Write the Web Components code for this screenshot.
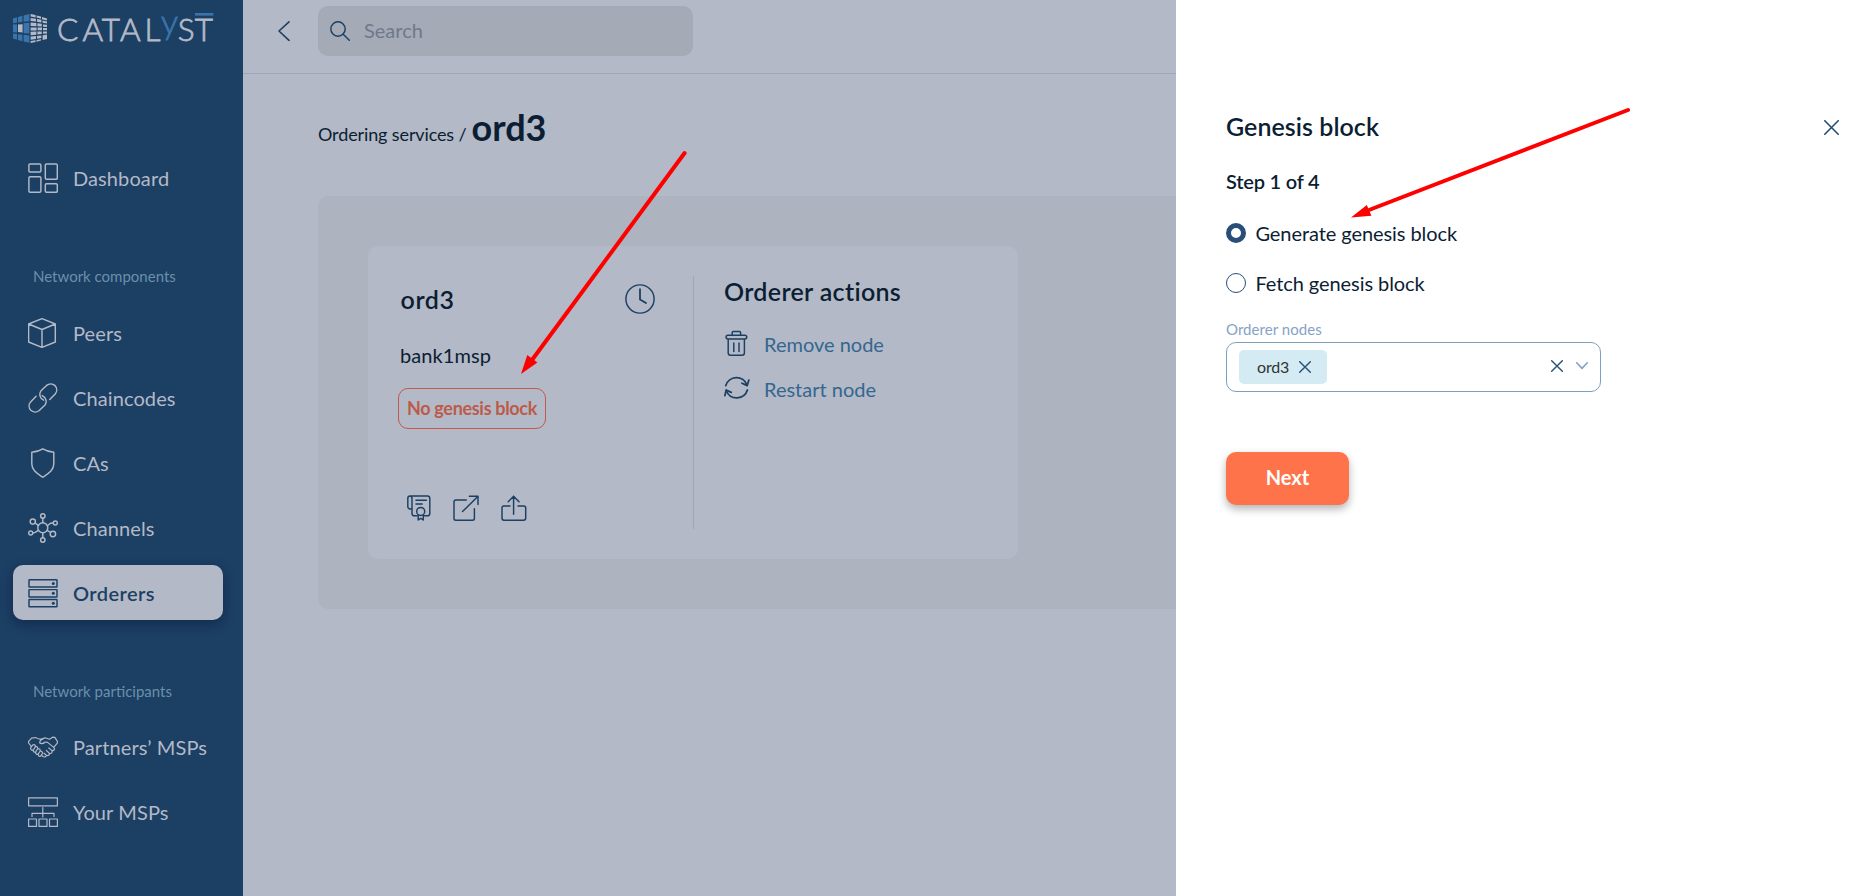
<!DOCTYPE html>
<html lang="en">
<head>
<meta charset="utf-8">
<title>Catalyst – Orderers</title>
<style>
  html, body { margin: 0; height: 100%; overflow: hidden; background: #b3b9c6; }
  body { font-family: Lato, "Open Sans", sans-serif; font-size: 20px; color: #0b1e33; }
</style>
</head>
<body>
<app-shell>
  <side-bar slot="nav">
    <nav-item icon="dashboard">Dashboard</nav-item>
    <nav-label>Network components</nav-label>
    <nav-item icon="cube">Peers</nav-item>
    <nav-item icon="chain">Chaincodes</nav-item>
    <nav-item icon="shield">CAs</nav-item>
    <nav-item icon="hub">Channels</nav-item>
    <nav-item icon="servers" active>Orderers</nav-item>
    <nav-label>Network participants</nav-label>
    <nav-item icon="handshake">Partners’ MSPs</nav-item>
    <nav-item icon="tree">Your MSPs</nav-item>
  </side-bar>
  <top-bar slot="main"></top-bar>
  <page-title slot="main" parent="Ordering services /">ord3</page-title>
  <node-panel slot="main">
    <node-card name="ord3" msp="bank1msp" status="No genesis block">
      <action-link icon="trash">Remove node</action-link>
      <action-link icon="restart">Restart node</action-link>
    </node-card>
  </node-panel>
  <side-drawer slot="drawer" heading="Genesis block" step="Step 1 of 4">
    <radio-option checked>Generate genesis block</radio-option>
    <radio-option>Fetch genesis block</radio-option>
    <multi-select label="Orderer nodes">ord3</multi-select>
    <primary-button>Next</primary-button>
  </side-drawer>
  <pointer-arrows slot="overlay"></pointer-arrows>
</app-shell>

<script>
const ICONS = {
  dashboard: [30, 30, '<rect x=".9" y=".9" width="12" height="8" rx="1.2"/><rect x="17.3" y=".9" width="12" height="15.4" rx="1.2"/><rect x=".9" y="13.7" width="12" height="15.5" rx="1.2"/><rect x="17.3" y="20.8" width="12" height="8.4" rx="1.2"/>'],
  cube: [30, 30, '<path d="M14 .7 27.3 6V24L14 29.4.6 24V6ZM.6 6 14 11.5 27.3 6M14 11.5V29.4"/>'],
  chain: [30, 30, '<path d="M21.8 16.6 27.2 11A6.4 6.4 0 0 0 27 2.6 6.4 6.4 0 0 0 18.6 2.4L13 7.8A6.3 6.3 0 0 0 15.6 17.2M8.1 13.2 2.6 18.9A6.4 6.4 0 0 0 2.8 27.3 6.4 6.4 0 0 0 11.2 27.5L17 22A6.3 6.3 0 0 0 14.2 12.6"/>'],
  shield: [30, 30, '<path d="M14.8.8C18 2.8 22 3.8 25.8 4.3V16C25.8 22.5 20 25.6 14.8 29.2 9.6 25.6 3.8 22.5 3.8 16V4.3C7.6 3.8 11.6 2.8 14.8.8Z"/>'],
  hub: [30, 30, '<circle cx="14.8" cy="14.8" r="5"/><circle cx="14.8" cy="3" r="2.2"/><circle cx="4.8" cy="8.6" r="2.6"/><circle cx="27.3" cy="10" r="2"/><circle cx="2.7" cy="20" r="2"/><circle cx="24.9" cy="21" r="2.7"/><circle cx="14.8" cy="27" r="2.2"/><path d="M14.8 5.2V9.8M14.8 19.8V24.8M7 10 10.4 12.4M25.3 10 22.5 10.2 19.4 12.7M4.7 20 7.2 19.4 10.4 17.3M19.2 17.4 22.6 19.5"/>'],
  servers: [30, 30, '<rect x="1" y="1.7" width="28" height="7.3" rx=".5"/><rect x="1" y="11.6" width="28" height="7.3" rx=".5"/><rect x="1" y="21.5" width="28" height="7.3" rx=".5"/><g fill="currentColor" stroke="none"><circle cx="25.3" cy="5.4" r="1.5"/><circle cx="25.3" cy="15.3" r="1.5"/><circle cx="25.3" cy="25.2" r="1.5"/></g>'],
  handshake: [30, 30, '<g stroke-width="1.2"><path d="M3.6 6.2 8 5.5C9 7 11 7.2 13.4 7L17 5.8 21.5 7.2 24.6 5.2 26.8 5.4 29.4 9.4V11.2L26.5 14.3 25.6 15.4M3.6 6.2.6 9.4V11L3.4 14.6M17 5.8 12.4 8.4 11.6 10.8C13.4 12.2 15.6 11.6 17.2 10L19.6 10.4 26 15.6C27.5 17.3 25.6 19.3 23.8 18.4L20.8 16M23.8 18.4C25 20.4 23.1 22.2 21.3 21.2L18.3 18.4M21.3 21.2C21.8 23.2 20 24.2 18.4 23.3L16 21.2M18.4 23.3C18 25 16.4 25.4 15 24.6L13.7 23.6"/><path d="M3.4 14.6 4.8 13C6.4 11.8 8 13.4 7.2 15L5.6 17.6C4.4 19 2.2 17.6 2.6 15.8ZM7.2 15C8.8 14 10.4 15.4 9.6 17L7.8 19.7C6.4 21 4.4 19.4 5.6 17.6M9.6 17C11.4 16.2 12.8 17.6 12 19.2L10.4 21.8C9 23 7 21.6 7.8 19.7M12 19.2C13.8 18.8 15 20.4 14.2 21.8L13 23.8C11.6 25 9.6 23.6 10.4 21.8"/></g>'],
  tree: [30, 30, '<path d="M.6.8H29.4V8.8H.6ZM14.8 10.5V20M4 19.5V16.3H26V19.5M.6 22H8.5V29.4H.6ZM11 22H19V29.4H11ZM21.5 22H29.4V29.4H21.5Z" stroke-width="1.2"/>'],
  back: [12, 20, '<path d="M11 .8 1 10 11 19.4" stroke-width="1.6"/>'],
  search: [20, 20, '<circle cx="8" cy="8" r="7.2"/><path d="M13.2 13.2 19.3 19.3"/>'],
  clock: [30, 30, '<circle cx="15" cy="15" r="14.1"/><path d="M15 5.2V15.4L21 19" stroke-width="1.8"/>'],
  certificate: [24, 26, '<path d="M5 3.5C5 1.8 4.3 1 3 1 1.6 1 .8 1.8.8 3.5V11.8C.8 13.6 2 14.2 5 14.2M3 1H20.5C22 1 22.8 2 22.8 3.4V18.4C22.8 20 22 20.8 20.4 20.8H17.5M5 3.5V18.4C5 20 6 20.8 7.4 20.8H10M9 5.2H19.4M9 9H15.2"/><circle cx="13.7" cy="16.4" r="4"/><path d="M11.2 19.6V25L13.7 23.4 16.3 25V19.6"/>'],
  external: [26, 26, '<path d="M13.3 5H3C1.8 5 1 5.8 1 7V23.4C1 24.6 1.8 25.2 3 25.2H19.4C20.6 25.2 21.4 24.6 21.4 23.4V13.6M9.5 16.6 25 1.3M16.4 1.3H25V9.6"/>'],
  share: [26, 26, '<path d="M9 11H2.8C1.6 11 1 11.8 1 13V23C1 24.4 1.7 25.2 3 25.2H22.6C24 25.2 24.7 24.4 24.7 23V13C24.7 11.8 24 11 22.8 11H17M12.6 19.2V1.2M7.2 6.8 12.6 1.2 18 6.8"/>'],
  trash: [26, 26, '<path d="M4.2 9V23C4.2 24.4 5 25.2 6.4 25.2H18C19.4 25.2 20.4 24.4 20.4 23V9M4 5.2H20.8C23.4 5.2 23.4 8.9 20.8 8.9H4C1.4 8.9 1.4 5.2 4 5.2ZM8.2 5.2V2.6C8.2 1.8 8.6 1.4 9.4 1.4H15.4C16.2 1.4 16.6 1.8 16.6 2.6V5.2M9.8 13V21.4M15 13V21.4"/>'],
  restart: [26, 24, '<g stroke-width="1.8"><path d="M1.8 9.6A11.2 11.2 0 0 1 23 9M23.4 14A11.2 11.2 0 0 1 2.4 15"/><path d="M18 7.2 23.2 9.6 24.8 4.2M7.2 16.4 2.2 14 .9 19.6"/></g>'],
  close: [15, 15, '<path d="M.8.8 14.2 14.2M14.2.8.8 14.2" stroke-width="1.6"/>'],
  cross: [12, 12, '<path d="M.7.7 11.3 11.3M11.3.7.7 11.3" stroke-width="1.4"/>'],
  chevron: [12, 8, '<path d="M.7.8 6 6.4 11.3.8" stroke-width="1.6"/>']
};

function define(tag, render) {
  customElements.define(tag, class extends HTMLElement {
    constructor() { super(); this.attachShadow({ mode: 'open' }); }
    connectedCallback() { this.shadowRoot.innerHTML = render(this); }
  });
}
const attr = (el, name) => el.getAttribute(name) || '';

define('ui-icon', el => {
  const [w, h, body] = ICONS[attr(el, 'name')];
  return `<style>:host{display:block;flex:none;width:${w}px;height:${h}px}svg{display:block}</style>
  <svg width="${w}" height="${h}" viewBox="0 0 ${w} ${h}" fill="none" stroke="currentColor" stroke-width="1.45" stroke-linejoin="round" stroke-linecap="round">${body}</svg>`;
});

define('app-shell', () => `<style>
  :host{display:flex;position:relative;width:100%;height:100vh;overflow:hidden}
  main{flex:1;min-width:0;display:flex;flex-direction:column;background:#b3b9c6}
</style>
<slot name="nav"></slot><main><slot name="main"></slot></main><slot name="drawer"></slot><slot name="overlay"></slot>`);

define('brand-logo', () => `<style>
  :host{display:block;height:50px}
  svg{display:block}
  text{font:300 31.5px Lato,sans-serif;fill:#b3b9c6;stroke:#b3b9c6;stroke-width:.8}
  .y{font-size:34px;fill:#3a74aa;stroke:#3a74aa}
</style>
<svg width="230" height="50" viewBox="0 0 230 50">
  <g fill="#3a74aa">
    <path d="M13 18.4 17 17.2V22.6L13 23.2ZM18 17 22.4 15.8V21.8L18 22.4ZM23.6 15.5 29.4 14V21.2L23.6 21.8ZM13 24.6 17 24.2V32.6L13 32.2ZM23.6 23.2 29.4 22.8V33.6L23.6 33.2ZM13 33.6 17 34V39.8L13 38.6ZM18 34.2 22.4 34.8V41.2L18 40ZM23.6 34.8 29.4 35.4V42.8L23.6 41.4Z"/>
    <rect x="195" y="13" width="18.4" height="2.6"/>
  </g>
  <g fill="#b3b9c6">
    <path d="M18 24.6 22.6 24.2V32.4L18 32Z"/>
    <path d="M30.6 14 35.6 15V17.4L30.6 16.6ZM36.6 15.4 41 16.6V18.8L36.6 17.6ZM42 17 47 18.4V20.6L42 19.2ZM30.6 18 36 18.8V21.6L30.6 21ZM37 19 41.4 19.8V22.4L37 21.8ZM42.6 20.4 47 21.4V23.6L42.6 22.8ZM30.6 22.4 36.4 23V26.2L30.6 26ZM37.4 23.2 41.8 23.8V26.4L37.4 26.2ZM43 24.4 47 24.8V27L43 26.8ZM30.6 27.4H36.6V30.4H30.6ZM37.6 27.6H42V30.2H37.6ZM43 28H47V30.2H43ZM30.6 31.8 36.4 31.6V34.8L30.6 35.2ZM37.4 31.6 41.8 31.4V34L37.4 34.6ZM43 31.4H47V33.4L43 33.8ZM30.6 36.6 36 36V39L30.6 39.8ZM37 36 41.4 35.4V38L37 38.8ZM42.6 35.2 47 34.6V39L42.6 40ZM30.6 41 35.6 40.2V42L30.6 43ZM36.6 40 41 39.2V40.6L36.6 41.8Z"/>
  </g>
  <text y="40.6" x="57 82.5 101.8 120 144.6">CATAL</text><text class="y" x="161" y="34.4">y</text><text y="40.6" x="177.8 194.8">ST</text>
</svg>`);

define('side-bar', () => `<style>
  :host{box-sizing:border-box;flex:none;width:243px;display:flex;flex-direction:column;background:#1c3f64}
  nav{display:flex;flex-direction:column;gap:10px;padding:100px 20px 0 13px}
</style><brand-logo></brand-logo><nav><slot></slot></nav>`);

define('nav-item', el => `<style>
  :host{box-sizing:border-box;display:flex;align-items:center;height:55px;padding-left:15px;gap:15px;border-radius:10px;color:#b3b9c6;line-height:24px;letter-spacing:.1px}
  :host([active]){background:#b3b9c6;color:#1c3f64;font-weight:600;letter-spacing:.4px;box-shadow:0 4px 12px rgba(0,15,40,.4)}
</style><ui-icon name="${attr(el, 'icon')}"></ui-icon><slot></slot>`);

define('nav-label', () => `<style>
  :host{display:block;box-sizing:border-box;height:80px;padding:52px 0 0 20px;font-size:15px;line-height:18px;color:#6a90ab}
  :host(:nth-of-type(2)){height:79px}
</style><slot></slot>`);

define('top-bar', () => `<style>
  :host{box-sizing:border-box;flex:none;display:flex;height:74px;padding:6px 0 0 35px;border-bottom:1px solid #99a8bf;color:#1c3f64}
  .back{display:flex;align-items:center;width:40px;height:50px}
  .box{box-sizing:border-box;display:flex;align-items:center;gap:14px;width:375px;height:50px;padding:0 0 1px 12px;border-radius:10px;background:#a4aab6}
  span{color:#70798a;line-height:24px;padding-bottom:2px}
</style><div class="back"><ui-icon name="back"></ui-icon></div><div class="box"><ui-icon name="search"></ui-icon><span>Search</span></div>`);

define('page-title', el => `<style>
  :host{flex:none;display:flex;align-items:baseline;gap:6px;height:44px;margin:31px 0 47px 75px;line-height:44px}
  span{font-size:18px;letter-spacing:-.12px}
  h1{margin:0 0 0 -1px;font-size:36px;font-weight:700}
</style><span>${attr(el, 'parent')}</span><h1><slot></slot></h1>`);

define('node-panel', () => `<style>
  :host{box-sizing:border-box;flex:none;display:flex;height:413px;margin-left:75px;padding:50px;border-radius:10px 0 0 10px;background:#adb3bf}
</style><slot></slot>`);

define('node-card', el => `<style>
  :host{box-sizing:border-box;display:flex;width:650px;height:313px;padding:30px 0;border-radius:10px;background:#b3b9c6}
  .info{box-sizing:border-box;width:325px;padding:8px 38px 0 32px;display:flex;flex-direction:column;align-items:flex-start}
  .head{display:flex;justify-content:space-between;align-items:center;width:100%;height:30px;color:#1c3f64}
  h2,h3{margin:0;color:#0b1e33;line-height:30px;font-size:25px;font-weight:600;letter-spacing:.33px}
  h2{letter-spacing:.6px;padding-left:.5px}
  h3{margin-bottom:15px}
  .msp{margin-top:29px;line-height:24px;letter-spacing:.1px}
  .status{box-sizing:border-box;width:148px;height:41px;margin:21px 0 0 -2px;border:1px solid #c05a49;border-radius:10px;color:#bd5b4b;font-size:18px;font-weight:700;letter-spacing:-.32px;line-height:39px;text-align:center;white-space:nowrap}
  .tools{display:flex;gap:22px;margin:66px 0 0 7px;color:#1c3f64}
  .actions{border-left:1px solid #99a8bf;padding-left:30px}
</style>
<div class="info"><div class="head"><h2>${attr(el, 'name')}</h2><ui-icon name="clock"></ui-icon></div>
<div class="msp">${attr(el, 'msp')}</div><div class="status">${attr(el, 'status')}</div>
<div class="tools"><ui-icon name="certificate"></ui-icon><ui-icon name="external"></ui-icon><ui-icon name="share"></ui-icon></div></div>
<div class="actions"><h3>Orderer actions</h3><slot></slot></div>`);

define('action-link', el => `<style>
  :host{display:flex;align-items:center;gap:14px;height:45px;color:#346790;line-height:24px}
  ui-icon{color:#1c3f64;position:relative;top:-1px}
</style><ui-icon name="${attr(el, 'icon')}"></ui-icon><slot></slot>`);

define('side-drawer', el => `<style>
  :host{box-sizing:border-box;flex:none;width:697px;padding:112px 34px 0 50px;background:#fff;display:flex;flex-direction:column;align-items:flex-start}
  .head{display:flex;justify-content:space-between;align-items:center;width:100%;height:30px;color:#1f4e79}
  h2{margin:0;padding-bottom:2px;font-size:25px;font-weight:600;line-height:30px;letter-spacing:.05px;color:#0b1e33}
  h3{margin:27px 0 28px;font-size:20px;font-weight:600;line-height:24px;letter-spacing:-.2px}
</style><div class="head"><h2>${attr(el, 'heading')}</h2><ui-icon name="close"></ui-icon></div><h3>${attr(el, 'step')}</h3><slot></slot>`);

define('radio-option', () => `<style>
  :host{display:flex;align-items:center;gap:9.4px;height:24px;margin-bottom:26px;line-height:24px;letter-spacing:-.07px}
  i{box-sizing:border-box;width:20px;height:20px;border:1px solid #274f77;border-radius:50%}
  :host([checked]) i{border-width:5px}
</style><i></i><slot></slot>`);

define('multi-select', el => `<style>
  :host{display:block;width:375px;margin:-1px 0 60px}
  label{display:block;height:22px;line-height:18px;font-size:15px;letter-spacing:.05px;color:#85a3c4}
  .box{box-sizing:border-box;display:flex;align-items:center;height:50px;padding:0 12.5px 0 12px;border:1px solid #7f9fc0;border-radius:10px;color:#274f77}
  .chip{display:flex;align-items:center;gap:10px;box-sizing:border-box;height:34px;width:88px;padding-left:18px;border-radius:5px;background:#d4ebf3;font-size:16px;letter-spacing:-.15px}
  .chip span{color:#333;line-height:20px;padding-bottom:1px}
  .clear{margin-left:auto;margin-right:13px}
  .open{color:#85a3c4}
  .clear,.open{position:relative;top:-1.5px}
</style><label>${attr(el, 'label')}</label><div class="box"><div class="chip"><span><slot></slot></span><ui-icon name="cross"></ui-icon></div><ui-icon class="clear" name="cross"></ui-icon><ui-icon class="open" name="chevron"></ui-icon></div>`);

define('primary-button', () => `<style>
  button{display:block;width:123px;height:53px;padding:0 0 4px;border:0;border-radius:10px;background:#ff734a;color:#fff;font:700 20px Lato,sans-serif;box-shadow:0 4px 8px rgba(0,0,0,.3)}
  :host{display:block}
</style><button><slot></slot></button>`);

define('pointer-arrows', () => `<style>
  :host{position:absolute;inset:0;pointer-events:none}svg{display:block}
</style><svg width="1873" height="896" viewBox="0 0 1873 896" fill="#f00" stroke="#f00" stroke-linecap="round">
  <path d="M684.6 153 532 360M1628 110 1369 210" stroke-width="4" fill="none"/>
  <path d="M521 374 527.3 355 537.4 362.4ZM1351 217.4 1366.8 205 1371.4 215.8Z" stroke="none"/>
</svg>`);
</script>
</body>
</html>
